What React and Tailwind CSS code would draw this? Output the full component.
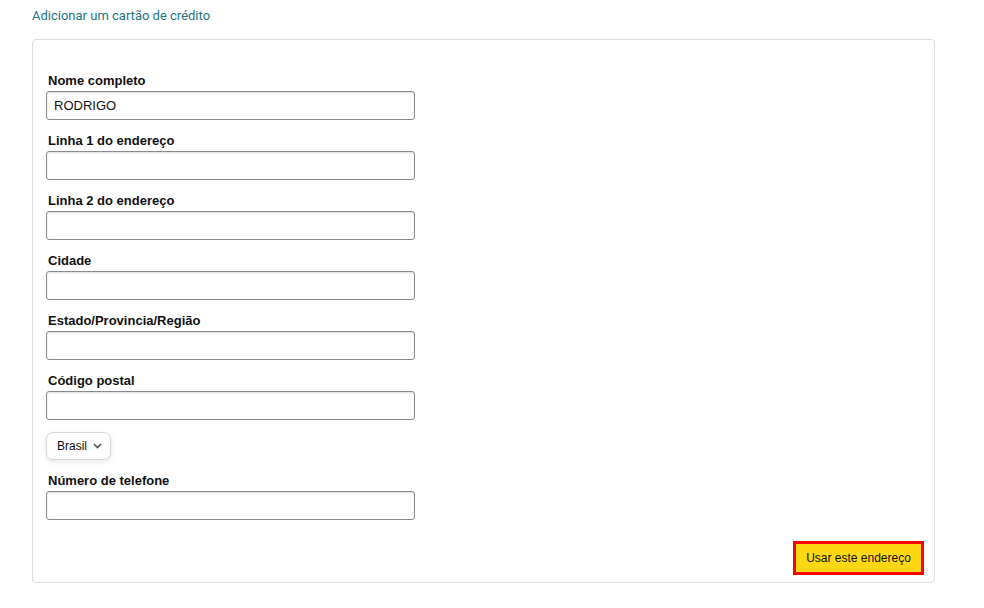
import React, { useState } from 'react';

const fields = [
  { id: 'fullName', label: 'Nome completo', value: 'RODRIGO' },
  { id: 'line1', label: 'Linha 1 do endereço', value: '' },
  { id: 'line2', label: 'Linha 2 do endereço', value: '' },
  { id: 'city', label: 'Cidade', value: '' },
  { id: 'state', label: 'Estado/Provincia/Região', value: '' },
  { id: 'zip', label: 'Código postal', value: '' },
];

function Field({ id, label, value, onChange }) {
  return (
    <div className="mb-[11px]">
      <label htmlFor={id} className="block h-[20px] pl-[2px] text-[13px] font-bold leading-[19px] text-[#111]">
        {label}
      </label>
      <input
        id={id}
        name={id}
        value={value}
        onChange={onChange}
        className="block h-[29px] w-[369px] rounded-[3px] border border-[#888c8c] bg-white px-[7px] text-[13px] text-[#111] shadow-[inset_0_1px_2px_rgba(15,17,17,0.15)] outline-none"
      />
    </div>
  );
}

export default function App() {
  const [form, setForm] = useState(
    Object.fromEntries(fields.map((f) => [f.id, f.value]).concat([['phone', '']]))
  );

  const handleChange = (e) => {
    const { name, value } = e.target;
    setForm((prev) => ({ ...prev, [name]: value }));
  };

  return (
    <div className="min-h-screen bg-white font-['Liberation_Sans',Arial,sans-serif] text-[#0f1111]">
      <div className="pl-[32px] pt-[6px]">
        <h1 className="h-[20px] text-[13px] leading-[19px] text-[#1d7486] font-['Roboto',sans-serif]">
          Adicionar um cartão de crédito
        </h1>
      </div>

      <div className="ml-[32px] mt-[13px] w-[903px] rounded-[4px] border border-[#dddddd] pb-[7px] pl-[13px] pr-[10px] pt-[31px]">
        {fields.map((f) => (
          <Field key={f.id} id={f.id} label={f.label} value={form[f.id]} onChange={handleChange} />
        ))}

        <div className="mt-[12px] mb-[11px]">
          <button
            type="button"
            className="flex h-[28px] items-center gap-[6px] rounded-[7px] border border-[#d5d9d9] bg-white pl-[10px] pr-[8px] text-[12px] text-[#0f1111] shadow-[0_2px_5px_rgba(213,217,217,0.6)]"
          >
            Brasil
            <svg width="9" height="6" viewBox="0 0 9 6" fill="none">
              <path d="M1 1l3.5 3.5L8 1" stroke="#555" strokeWidth="1.6" />
            </svg>
          </button>
        </div>

        <Field id="phone" label="Número de telefone" value={form.phone} onChange={handleChange} />

        <div className="mt-[21px] flex justify-end">
          <button
            type="button"
            className="h-[34px] w-[131px] border-[3px] border-[#ff0000] bg-[#ffd814] text-[12px] text-[#0f1111]"
          >
            Usar este endereço
          </button>
        </div>
      </div>
    </div>
  );
}
